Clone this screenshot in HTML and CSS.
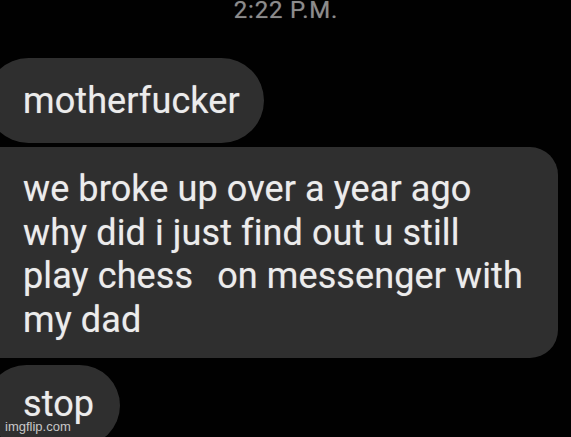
FILE: index.html
```html
<!DOCTYPE html>
<html lang="en">
<head>
<meta charset="utf-8">
<title>Messages</title>
<link rel="stylesheet" href="styles.css">
</head>
<body>
<div class="screen">
  <div class="timestamp">2:22 P.M.</div>
  <div class="thread">
    <div class="bubble bubble-pill bubble-first">motherfucker</div>
    <div class="bubble bubble-block">we broke up over a year ago<br>why did i just find out u still<br>play chess<span class="wide-gap"> </span>on messenger with<br>my dad</div>
    <div class="bubble bubble-pill bubble-last">stop</div>
  </div>
  <div class="watermark">imgflip.com</div>
</div>
</body>
</html>
```

FILE: styles.css
```css
html, body {
  margin: 0;
  padding: 0;
  background: #000;
}

.screen {
  position: relative;
  width: 571px;
  height: 437px;
  overflow: hidden;
  background: #010101;
  font-family: Roboto, "Noto Sans", sans-serif;
}

.timestamp {
  margin-top: -2px;
  height: 24px;
  font-size: 24px;
  line-height: 24px;
  text-align: center;
  color: #8c8c8c;
  letter-spacing: 0.8px;
  padding-left: 1px;
  text-shadow: 0 0 1px rgba(140, 140, 140, 0.6);
}

.thread {
  display: flex;
  flex-direction: column;
  align-items: flex-start;
  gap: 4px;
  margin-top: 36px;
}

.bubble {
  background: #2f2f2f;
  color: #ececec;
  font-size: 36px;
  line-height: 43.5px;
  letter-spacing: 0.1px;
  white-space: nowrap;
  text-shadow: 0 0 1px rgba(255, 255, 255, 0.45);
}

.bubble-pill {
  margin-left: -14px;
  padding: 22px 24px 19.5px 37px;
  border-radius: 43px;
}

.bubble-block {
  align-self: stretch;
  margin-left: -30px;
  margin-right: 13px;
  padding: 21px 20px 16px 53px;
  border-radius: 28px;
}

.wide-gap {
  display: inline-block;
  width: 24px;
}

.bubble-last {
  margin-top: 3px;
  padding-top: 18px;
  padding-right: 26px;
}

.watermark {
  position: absolute;
  left: 5px;
  bottom: 3px;
  font-family: "Liberation Sans", Arial, sans-serif;
  font-size: 13px;
  line-height: 15px;
  color: #c8c8c8;
}
```
